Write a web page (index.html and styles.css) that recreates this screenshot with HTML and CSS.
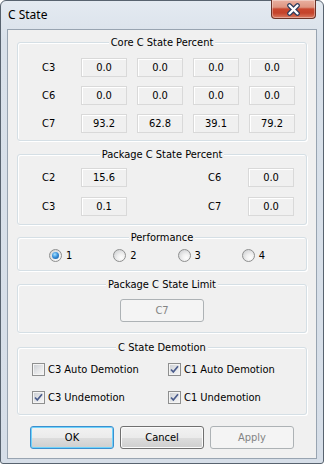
FILE: index.html
```html
<!DOCTYPE html>
<html lang="en">
<head>
  <meta charset="UTF-8" />
  <meta name="viewport" content="width=device-width, initial-scale=1.0"/>
  <title>C State</title>
  <link rel="stylesheet" href="styles.css">
</head>
<body>
  <div class="window">
    <div class="titlebar">
      <div class="title-text">C State</div>
      <div class="close-btn">
        <svg width="17" height="13" viewBox="0 0 17 13">
          <path d="M4.5 2.5 L12.5 10.5 M12.5 2.5 L4.5 10.5" stroke="#2b3b5c" stroke-width="4.6" stroke-linecap="round" fill="none"/>
          <path d="M4.5 2.5 L12.5 10.5 M12.5 2.5 L4.5 10.5" stroke="#fff" stroke-width="2.4" stroke-linecap="round" fill="none"/>
        </svg>
      </div>
    </div>

    <div class="client">
      <div class="group core">
        <div class="group-title"><span>Core C State Percent</span></div>
        <div class="core-grid">
          <div class="lbl">C3</div>
          <div class="val">0.0</div><div class="val">0.0</div><div class="val">0.0</div><div class="val">0.0</div>
          <div class="lbl">C6</div>
          <div class="val">0.0</div><div class="val">0.0</div><div class="val">0.0</div><div class="val">0.0</div>
          <div class="lbl">C7</div>
          <div class="val">93.2</div><div class="val">62.8</div><div class="val">39.1</div><div class="val">79.2</div>
        </div>
      </div>

      <div class="group package">
        <div class="group-title"><span>Package C State Percent</span></div>
        <div class="pkg-grid">
          <div class="lbl">C2</div><div class="val">15.6</div><div></div>
          <div class="lbl">C6</div><div class="val">0.0</div>
          <div class="lbl">C3</div><div class="val">0.1</div><div></div>
          <div class="lbl">C7</div><div class="val">0.0</div>
        </div>
      </div>

      <div class="group perf">
        <div class="group-title"><span>Performance</span></div>
        <div class="radio-row">
          <div class="radio-item"><div class="radio on"></div><span>1</span></div>
          <div class="radio-item"><div class="radio"></div><span>2</span></div>
          <div class="radio-item"><div class="radio"></div><span>3</span></div>
          <div class="radio-item"><div class="radio"></div><span>4</span></div>
        </div>
      </div>

      <div class="group limit">
        <div class="group-title"><span>Package C State Limit</span></div>
        <div class="limit-row">
          <div class="btn disabled">C7</div>
        </div>
      </div>

      <div class="group demotion">
        <div class="group-title"><span>C State Demotion</span></div>
        <div class="check-grid">
          <div class="check-item"><div class="check"></div><span>C3 Auto Demotion</span></div>
          <div class="check-item"><div class="check on"><svg width="11" height="11" viewBox="0 0 11 11"><path d="M2 5.5 L4.3 8 L9 2.2" stroke="#4a5c8c" stroke-width="1.7" fill="none"/></svg></div><span>C1 Auto Demotion</span></div>
          <div class="check-item"><div class="check on"><svg width="11" height="11" viewBox="0 0 11 11"><path d="M2 5.5 L4.3 8 L9 2.2" stroke="#4a5c8c" stroke-width="1.7" fill="none"/></svg></div><span>C3 Undemotion</span></div>
          <div class="check-item"><div class="check on"><svg width="11" height="11" viewBox="0 0 11 11"><path d="M2 5.5 L4.3 8 L9 2.2" stroke="#4a5c8c" stroke-width="1.7" fill="none"/></svg></div><span>C1 Undemotion</span></div>
        </div>
      </div>

      <div class="buttons">
        <div class="btn default">OK</div>
        <div class="btn">Cancel</div>
        <div class="btn disabled">Apply</div>
      </div>
    </div>
  </div>
</body>
</html>
```

FILE: styles.css
```css
body {
  margin: 0;
  background-color: #fff;
  font-family: "DejaVu Sans Condensed", "Liberation Sans", sans-serif;
  font-size: 11px;
  color: #000;
}
.window {
  width: 324px;
  height: 464px;
  box-sizing: border-box;
  border: 1px solid #58636f;
  border-radius: 6px 6px 3px 3px;
  background: linear-gradient(#e4eaf1, #d9e1ea 40px, #d6dee8);
  padding: 0 6px 4px 6px;
  display: flex;
  flex-direction: column;
}
.titlebar {
  height: 28px;
  display: flex;
  justify-content: space-between;
  align-items: flex-start;
  margin: 0 -6px;
}
.title-text {
  font-family: "Noto Sans", "Open Sans", sans-serif;
  font-size: 12px;
  line-height: 28px;
  padding-left: 7px;
  color: #000;
}
.close-btn {
  width: 45px;
  height: 19px;
  box-sizing: border-box;
  margin-right: 7px;
  margin-top: -1px;
  border: 1px solid #6b3328;
  border-top: none;
  border-radius: 0 0 4px 4px;
  background: linear-gradient(#eab0a0 0%, #de9581 40%, #c9472f 50%, #c4432b 72%, #da7b62 100%);
  box-shadow: inset 0 0 0 1px rgba(255,255,255,0.35);
  display: flex;
  align-items: center;
  justify-content: center;
}
.close-btn svg {
  display: block;
}
.client {
  flex: 1;
  border: 1px solid #98a4b1;
  background-color: #f0f0f0;
  display: flex;
  flex-direction: column;
}
.group {
  margin: 0 9px;
  border: 1px solid #d5dfe5;
  border-radius: 3px;
  box-shadow: inset 1px 1px 0 #fff, 1px 1px 0 #fff;
}
.group-title {
  height: 13px;
  line-height: 13px;
  margin-top: -7px;
  text-align: center;
}
.group-title span {
  background-color: #f0f0f0;
  padding: 0 2px;
}
.core { margin-top: 12px; padding-bottom: 7px; }
.package { margin-top: 13px; padding-bottom: 8px; }
.perf { margin-top: 12px; padding-bottom: 8px; }
.limit { margin-top: 13px; padding-bottom: 10px; }
.demotion { margin-top: 14px; padding-bottom: 10px; }

.lbl {
  padding-left: 24px;
  line-height: 19px;
}
.val {
  height: 19px;
  box-sizing: border-box;
  border: 1px solid #d9d9d9;
  box-shadow: inset 1px 1px 0 #fff;
  text-align: center;
  line-height: 17px;
}
.core-grid {
  margin-top: 9px;
  display: grid;
  grid-template-columns: 53px 46px 46px 46px 46px;
  column-gap: 10px;
  row-gap: 9px;
}
.pkg-grid {
  margin-top: 7px;
  padding-right: 12px;
  display: grid;
  grid-template-columns: 63px 46px 1fr 40px 46px;
  row-gap: 10px;
}
.pkg-grid .lbl:nth-child(4),
.pkg-grid .lbl:nth-child(9) {
  padding-left: 0;
}
.radio-row {
  margin-top: 5px;
  padding-left: 31px;
  display: flex;
  height: 13px;
}
.radio-item {
  width: 66px;
  display: flex;
  align-items: center;
  gap: 4px;
  line-height: 13px;
}
.radio {
  width: 13px;
  height: 13px;
  box-sizing: border-box;
  border-radius: 50%;
  border: 1px solid #8e8f8f;
  background: radial-gradient(circle at 65% 70%, #fdfdfd 0, #f0f0f0 35%, #c7c9cc 100%);
  display: flex;
  align-items: center;
  justify-content: center;
}
.radio.on::after {
  content: "";
  width: 7px;
  height: 7px;
  border-radius: 50%;
  background: radial-gradient(circle at 40% 35%, #a7e2ff 0, #3c92dc 45%, #0f4f91 100%);
}
.limit-row {
  margin-top: 8px;
  display: flex;
  justify-content: center;
}
.check-grid {
  margin-top: 9px;
  padding-left: 14px;
  display: grid;
  grid-template-columns: 136px 1fr;
  row-gap: 15px;
}
.check-item {
  display: flex;
  align-items: center;
  gap: 3px;
  height: 13px;
}
.check {
  width: 13px;
  height: 13px;
  box-sizing: border-box;
  border: 1px solid #8e8f8f;
  background: linear-gradient(135deg, #c8ccd1 0%, #e6e7e9 55%, #f7f7f7 100%);
  box-shadow: inset 0 0 0 1px #f4f4f4;
  display: flex;
  align-items: center;
  justify-content: center;
}
.check svg {
  display: block;
}
.buttons {
  margin-top: 11px;
  display: flex;
  justify-content: center;
  gap: 6px;
}
.btn {
  width: 84px;
  height: 23px;
  box-sizing: border-box;
  border: 1px solid #707070;
  border-radius: 3px;
  background: linear-gradient(#f2f2f2 0%, #ebebeb 50%, #dddddd 51%, #cfcfcf 100%);
  box-shadow: inset 0 0 0 1px #fbfbfb;
  text-align: center;
  line-height: 21px;
}
.btn.default {
  border-color: #3c8fcf;
  box-shadow: inset 0 0 0 1px #6fd3fb;
}
.btn.disabled {
  border-color: #adb2b5;
  background: #f4f4f4;
  box-shadow: none;
  color: #838383;
}
```
